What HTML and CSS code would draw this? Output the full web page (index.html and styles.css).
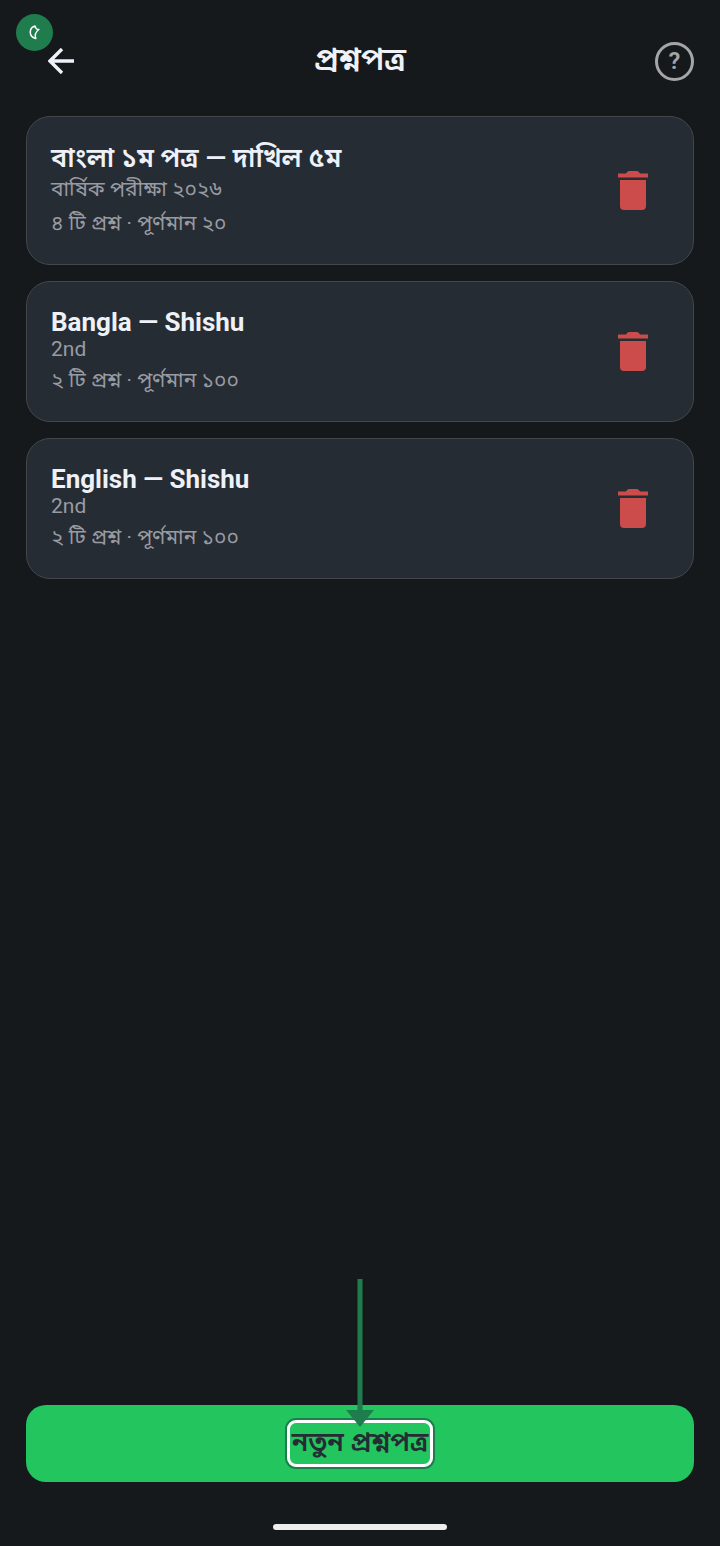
FILE: index.html
```html
<!DOCTYPE html>
<html lang="bn">
<head>
<meta charset="utf-8">
<meta name="viewport" content="width=device-width, initial-scale=1">
<title>প্রশ্নপত্র</title>
<link rel="stylesheet" href="styles.css">
</head>
<body>
<div class="screen">
  <header class="topbar">
    <button class="icon-button" type="button" aria-label="Back">
      <svg class="back-icon" viewBox="0 0 26 26" aria-hidden="true"><path d="M26 13H2M14 1L2 13l12 12" fill="none" stroke="currentColor" stroke-width="3.4"/></svg>
    </button>
    <h1 class="page-title">প্রশ্নপত্র</h1>
    <button class="help-button" type="button" aria-label="Help">?</button>
    <span class="badge">
      <svg class="badge-icon" viewBox="0 0 37 37" aria-hidden="true"><path d="M19 12C12.800 14 12.300 22.500 19.800 24.600C18.600 21.500 19.200 18.300 22.900 15.500Q20.300 16.300 19 12z" fill="none" stroke="currentColor" stroke-width="1.5" stroke-linejoin="round"/></svg>
    </span>
  </header>

  <main class="papers">
    <article class="card">
      <div class="card-text">
        <h2 class="card-title card-title-bn">বাংলা ১ম পত্র — দাখিল ৫ম</h2>
        <p class="card-exam card-exam-bn">বার্ষিক পরীক্ষা ২০২৬</p>
        <p class="card-meta">৪ টি প্রশ্ন · পূর্ণমান ২০</p>
      </div>
      <button class="delete-button" type="button" aria-label="Delete">
        <svg class="trash-icon" viewBox="0 0 30 39" aria-hidden="true"><path d="M0 2.5h8Q9 0 11 0h8q2 0 3 2.500h8v4H0zM2 9h26v26q0 4-4 4H6q-4 0-4-4z" fill="currentColor"/></svg>
      </button>
    </article>
    <article class="card">
      <div class="card-text">
        <h2 class="card-title">Bangla — Shishu</h2>
        <p class="card-exam">2nd</p>
        <p class="card-meta">২ টি প্রশ্ন · পূর্ণমান ১০০</p>
      </div>
      <button class="delete-button" type="button" aria-label="Delete">
        <svg class="trash-icon" viewBox="0 0 30 39" aria-hidden="true"><path d="M0 2.5h8Q9 0 11 0h8q2 0 3 2.500h8v4H0zM2 9h26v26q0 4-4 4H6q-4 0-4-4z" fill="currentColor"/></svg>
      </button>
    </article>
    <article class="card">
      <div class="card-text">
        <h2 class="card-title">English — Shishu</h2>
        <p class="card-exam">2nd</p>
        <p class="card-meta">২ টি প্রশ্ন · পূর্ণমান ১০০</p>
      </div>
      <button class="delete-button" type="button" aria-label="Delete">
        <svg class="trash-icon" viewBox="0 0 30 39" aria-hidden="true"><path d="M0 2.5h8Q9 0 11 0h8q2 0 3 2.500h8v4H0zM2 9h26v26q0 4-4 4H6q-4 0-4-4z" fill="currentColor"/></svg>
      </button>
    </article>
  </main>

  <footer class="footer">
    <button class="new-button" type="button">
      <span class="new-label">নতুন প্রশ্নপত্র
        <svg class="pointer" viewBox="0 0 28 148" aria-hidden="true"><path d="M11.5 0h5v131h11.500L14 148 0 131h11.500z" fill="currentColor"/></svg>
      </span>
    </button>
    <div class="home-indicator"></div>
  </footer>
</div>
</body>
</html>
```
FILE: styles.css
```css
* {
  box-sizing: border-box;
}

body {
  margin: 0;
  background: #15191c;
  color: #eef1f8;
  font-family: Roboto, "Noto Sans Bengali", "Noto Sans", sans-serif;
}

button {
  margin: 0;
  padding: 0;
  border: 0;
  background: none;
  color: inherit;
  font: inherit;
  cursor: pointer;
}

.screen {
  display: flex;
  flex-direction: column;
  min-height: 100vh;
  padding: 0 26px;
}

.topbar {
  position: relative;
  display: grid;
  grid-template-columns: 48px 1fr 48px;
  align-items: center;
  padding: 37px 0 31px;
}

.icon-button {
  display: flex;
  justify-content: flex-end;
  height: 48px;
  align-items: center;
}

.back-icon {
  width: 26px;
  height: 26px;
}

.page-title {
  margin: 0;
  padding-bottom: 4px;
  font-size: 32px;
  line-height: 44px;
  font-weight: 600;
  text-align: center;
}

.help-button {
  justify-self: end;
  width: 39px;
  height: 39px;
  border: 3px solid #a3a5a9;
  border-radius: 50%;
  color: #a3a5a9;
  font-size: 24px;
  line-height: 33px;
  font-weight: 600;
}

.badge {
  position: absolute;
  top: 14px;
  left: -10px;
  width: 37px;
  height: 37px;
  border-radius: 50%;
  background: #1f7d4d;
  color: #ffffff;
}

.badge-icon {
  display: block;
  width: 100%;
  height: 100%;
}

.papers {
  display: flex;
  flex: 1;
  flex-direction: column;
  gap: 16px;
}

.card {
  display: flex;
  align-items: center;
  justify-content: space-between;
  padding: 25px 45px 25px 24px;
  border: 1px solid #43474c;
  border-radius: 24px;
  background: #262c33;
}

.card-title,
.card-exam,
.card-meta {
  margin: 0;
}

.card-title {
  font-size: 26px;
  line-height: 30px;
  font-weight: 700;
}

.card-title-bn {
  font-size: 27px;
  line-height: 32px;
  font-weight: 600;
}

.card-exam,
.card-meta {
  color: #999ba2;
  font-size: 21px;
}

.card-exam {
  line-height: 25px;
}

.card-exam-bn {
  line-height: 31px;
}

.card-meta {
  padding-top: 2px;
  line-height: 32px;
}

.delete-button {
  display: flex;
  color: #cb4c4a;
}

.trash-icon {
  width: 30px;
  height: 39px;
}

.footer {
  display: flex;
  flex-direction: column;
  align-items: center;
  padding-bottom: 16px;
}

.new-button {
  display: flex;
  align-items: center;
  justify-content: center;
  width: 100%;
  height: 77px;
  margin-bottom: 42px;
  border-radius: 20px;
  background: #22c55e;
  color: #262c33;
}

.new-label {
  position: relative;
  padding: 0 2px 3px;
  border: 3px solid #ffffff;
  border-radius: 9px;
  box-shadow: 0 0 0 2px #1f7d4d;
  font-size: 27px;
  line-height: 38px;
  font-weight: 600;
}

.pointer {
  position: absolute;
  bottom: 100%;
  left: 50%;
  width: 28px;
  height: 148px;
  margin: 0 0 -4px -14px;
  color: #1f7d4d;
}

.home-indicator {
  width: 174px;
  height: 6px;
  border-radius: 3px;
  background: #eeeeee;
}
```
